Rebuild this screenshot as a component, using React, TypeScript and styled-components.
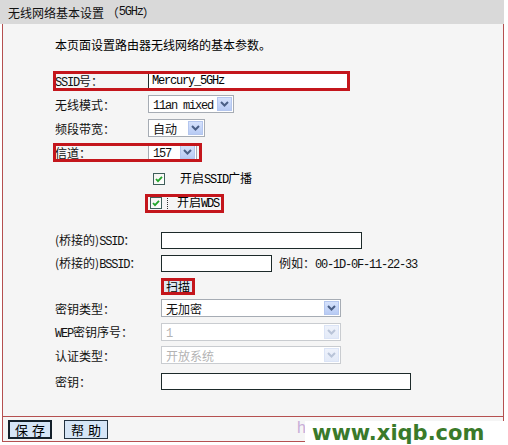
import React from 'react';
import styled, { createGlobalStyle } from 'styled-components';

const Global = createGlobalStyle`
  html, body { margin: 0; padding: 0; background: #ffffff; }
  body {
    font-family: "Noto Sans CJK SC", "Liberation Sans", sans-serif;
    font-size: 12px;
    color: #000;
  }
`;

const Page = styled.div`
  position: relative;
  width: 508px;
  height: 445px;
  overflow: hidden;
  background: #fff;
`;

const Header = styled.div`
  width: 504px;
  height: 24px;
  box-sizing: border-box;
  padding-left: 8px;
  background: #d9d9d9;
  display: flex;
  align-items: center;
  font-size: 12px;
  color: #111;
`;

const Lat = styled.span`
  font-family: "Liberation Mono", monospace;
  font-size: 12px;
  letter-spacing: -1.2px;
`;

const Panel = styled.div`
  margin-left: 2px;
  width: 502px;
  box-sizing: border-box;
  border-left: 1px solid #b55050;
  border-right: 1px solid #b55050;
  border-bottom: 1px solid #b55050;
  background: #f5f5f5;
`;

const Body = styled.div`
  height: 393px;
  box-sizing: border-box;
  border-bottom: 1px solid #b55050;
  padding-left: 52px;
  display: flex;
  flex-direction: column;
`;

const Row = styled.div<{ $h?: number; $mt?: number }>`
  height: ${p => p.$h ?? 24}px;
  margin-top: ${p => p.$mt ?? 0}px;
  display: flex;
  align-items: center;
  flex-shrink: 0;
`;

const Label = styled.div<{ $w: number }>`
  width: ${p => p.$w}px;
  flex-shrink: 0;
  white-space: nowrap;
  color: #111;
`;

const Highlight = styled.div<{ $h: number; $pl?: number; $pr?: number }>`
  display: flex;
  align-items: center;
  height: ${p => p.$h}px;
  margin-left: ${p => -(p.$pl ?? 0)}px;
  padding-left: ${p => p.$pl ?? 0}px;
  padding-right: ${p => p.$pr ?? 0}px;
  outline: 3px solid #c4161c;
  outline-offset: -1px;
`;

const TextInput = styled.div<{ $w: number; $h?: number }>`
  width: ${p => p.$w}px;
  height: ${p => p.$h ?? 17}px;
  box-sizing: border-box;
  border: 1px solid #1d2a2a;
  background: #fff;
  display: flex;
  align-items: center;
  padding-left: 3px;
`;

const SelectBox = styled.div<{ $w: number; $disabled?: boolean }>`
  width: ${p => p.$w}px;
  height: 18px;
  box-sizing: border-box;
  border: 1px solid ${p => (p.$disabled ? '#c9ccd0' : '#a6acb4')};
  background: #fff;
  display: flex;
  align-items: center;
  justify-content: space-between;
  padding: 0 1px 0 4px;
  color: ${p => (p.$disabled ? '#b3b3b3' : '#111')};
`;

const Arrow = styled.div<{ $disabled?: boolean }>`
  width: 15px;
  height: 14px;
  box-sizing: border-box;
  border: 1px solid ${p => (p.$disabled ? '#dbe4f6' : '#b4c6ee')};
  background: ${p =>
    p.$disabled
      ? 'linear-gradient(#eef2fb, #e3eaf8)'
      : 'linear-gradient(#d6e2fc, #b8cbf4)'};
  display: flex;
  align-items: center;
  justify-content: center;
`;

const CheckRow = styled.div`
  display: flex;
  align-items: center;
`;

const Box = styled.div`
  width: 12px;
  height: 12px;
  box-sizing: border-box;
  border: 1px solid #3f5f5a;
  background: linear-gradient(135deg, #f3f3ef, #ffffff);
  display: flex;
  align-items: center;
  justify-content: center;
`;

const CheckText = styled.span<{ $focused?: boolean }>`
  margin-left: ${p => (p.$focused ? 5 : 15)}px;
  padding-left: ${p => (p.$focused ? 9 : 0)}px;
  border-left: ${p => (p.$focused ? '1px dotted #333' : 'none')};
  line-height: 14px;
`;

const ScanButton = styled.div`
  height: 14px;
  padding: 0 3px;
  background: #dde6f1;
  display: flex;
  align-items: center;
`;

const Hint = styled.span`
  margin-left: 7px;
  color: #111;
`;

const Footer = styled.div`
  height: 24px;
  display: flex;
  align-items: center;
  padding-left: 5px;
  position: relative;
`;

const Button = styled.div<{ $primary?: boolean }>`
  width: 44px;
  height: 19px;
  box-sizing: border-box;
  border: ${p => (p.$primary ? '2px solid #14202a' : '1px solid #233240')};
  background: #d6e5f6;
  display: flex;
  align-items: center;
  justify-content: center;
  font-size: 13px;
  letter-spacing: 4px;
  padding-left: 4px;
  margin-right: 12px;
`;

const Link = styled.span`
  position: absolute;
  left: 294px;
  top: 2px;
  font-family: "Liberation Sans", sans-serif;
  font-size: 16px;
  color: #c8acd8;
`;

const Watermark = styled.div`
  position: absolute;
  left: 305px;
  top: 421px;
  width: 203px;
  height: 24px;
  background: #fff;
  display: flex;
  align-items: center;
  padding-left: 7px;
  box-sizing: border-box;
  font-family: "DejaVu Sans", "Liberation Sans", sans-serif;
  font-weight: bold;
  font-size: 21px;
  color: #3a7a2a;
`;

const Chevron = ({ disabled }: { disabled?: boolean }) => (
  <svg width="9" height="6" viewBox="0 0 9 6">
    <path
      d="M1 1 L4.5 4.5 L8 1"
      fill="none"
      stroke={disabled ? '#b9c4d8' : '#4a5f86'}
      strokeWidth="2"
    />
  </svg>
);

const Select = ({ w, text, disabled }: { w: number; text: React.ReactNode; disabled?: boolean }) => (
  <SelectBox $w={w} $disabled={disabled}>
    <span>{text}</span>
    <Arrow $disabled={disabled}>
      <Chevron disabled={disabled} />
    </Arrow>
  </SelectBox>
);

const Check = ({ label, focused }: { label: React.ReactNode; focused?: boolean }) => (
  <CheckRow>
    <Box>
      <svg width="10" height="10" viewBox="0 0 10 10">
        <path d="M2 5 L4 7.2 L8 2.8" fill="none" stroke="#22a52a" strokeWidth="1.8" />
      </svg>
    </Box>
    <CheckText $focused={focused}>{label}</CheckText>
  </CheckRow>
);

export default function App() {
  return (
    <Page>
      <Global />
      <Header>
        无线网络基本设置 （<Lat>5GHz</Lat>）
      </Header>
      <Panel>
        <Body>
          <Row $mt={8}>本页面设置路由器无线网络的基本参数。</Row>
          <Row $mt={14} $h={22}>
            <Highlight $h={16}>
              <Label $w={93}>
                <Lat>SSID</Lat>号：
              </Label>
              <TextInput $w={200} $h={16}>
                <Lat>Mercury_5GHz</Lat>
              </TextInput>
            </Highlight>
          </Row>
          <Row>
            <Label $w={93}>无线模式：</Label>
            <Select w={86} text={<Lat>11an mixed</Lat>} />
          </Row>
          <Row>
            <Label $w={93}>频段带宽：</Label>
            <Select w={57} text="自动" />
          </Row>
          <Row>
            <Highlight $h={15} $pr={3}>
              <Label $w={93}>信道：</Label>
              <Select w={49} text={<Lat>157</Lat>} />
            </Highlight>
          </Row>
          <Row $mt={3}>
            <Label $w={98} />
            <Check label={<>开启<Lat>SSID</Lat>广播</>} />
          </Row>
          <Row>
            <Label $w={95} />
            <Highlight $h={15} $pl={3} $pr={3}>
              <Check focused label={<>开启<Lat>WDS</Lat></>} />
            </Highlight>
          </Row>
          <Row $mt={13}>
            <Label $w={106}>
              (桥接的)<Lat>SSID</Lat>：
            </Label>
            <TextInput $w={201} />
          </Row>
          <Row $h={22}>
            <Label $w={106}>
              (桥接的)<Lat>BSSID</Lat>：
            </Label>
            <TextInput $w={111} />
            <Hint>
              例如：<Lat>00-1D-0F-11-22-33</Lat>
            </Hint>
          </Row>
          <Row $h={22} $mt={1}>
            <Label $w={108} />
            <Highlight $h={13}>
              <ScanButton>扫描</ScanButton>
            </Highlight>
          </Row>
          <Row $h={22}>
            <Label $w={106}>密钥类型：</Label>
            <Select w={180} text="无加密" />
          </Row>
          <Row $mt={1}>
            <Label $w={106}>
              <Lat>WEP</Lat>密钥序号：
            </Label>
            <Select w={180} text={<Lat>1</Lat>} disabled />
          </Row>
          <Row $h={22}>
            <Label $w={106}>认证类型：</Label>
            <Select w={180} text="开放系统" disabled />
          </Row>
          <Row $mt={3}>
            <Label $w={106}>密钥：</Label>
            <TextInput $w={250} />
          </Row>
        </Body>
        <Footer>
          <Button $primary>保存</Button>
          <Button>帮助</Button>
          <Link>h</Link>
        </Footer>
      </Panel>
      <Watermark>www.xiqb.com</Watermark>
    </Page>
  );
}
